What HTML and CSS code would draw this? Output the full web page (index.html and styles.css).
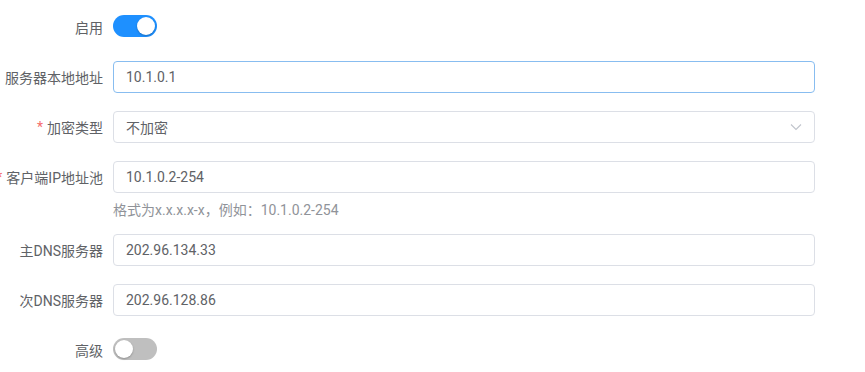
FILE: index.html
```html
<!DOCTYPE html>
<html lang="zh-CN">
<head>
<meta charset="utf-8">
<title>表单</title>
<link rel="stylesheet" href="styles.css">
</head>
<body>
<form class="form">
  <div class="row">
    <div class="label">启用</div>
    <div class="control"><span class="switch on"><span class="knob"></span></span></div>
  </div>
  <div class="row">
    <div class="label">服务器本地地址</div>
    <div class="control"><div class="input focus">10.1.0.1</div></div>
  </div>
  <div class="row">
    <div class="label"><span class="req">*</span>加密类型</div>
    <div class="control"><div class="input select">不加密
      <svg class="arrow" width="12" height="8" viewBox="0 0 12 8"><path d="M1 1.5 L6 6.5 L11 1.5" fill="none" stroke="#c0c4cc" stroke-width="1.1"/></svg></div></div>
  </div>
  <div class="row with-help">
    <div class="label"><span class="req">*</span>客户端IP地址池</div>
    <div class="control"><div class="input">10.1.0.2-254</div>
      <div class="help">格式为x.x.x.x-x，例如：10.1.0.2-254</div></div>
  </div>
  <div class="row">
    <div class="label">主DNS服务器</div>
    <div class="control"><div class="input">202.96.134.33</div></div>
  </div>
  <div class="row">
    <div class="label">次DNS服务器</div>
    <div class="control"><div class="input">202.96.128.86</div></div>
  </div>
  <div class="row">
    <div class="label">高级</div>
    <div class="control"><span class="switch off"><span class="knob"></span></span></div>
  </div>
</form>
</body>
</html>
```
FILE: styles.css
```css
html, body {
  margin: 0;
  padding: 0;
  background: #fff;
}
body {
  font-family: Roboto, "Noto Sans CJK SC", sans-serif;
  font-size: 14px;
  color: #606266;
}
.form {
  padding: 11px 50px 0 0;
}
.row {
  display: flex;
  align-items: flex-start;
  margin-bottom: 18px;
}
.row.with-help {
  margin-bottom: 0;
}
.label {
  flex: 0 0 113px;
  min-width: 0;
  box-sizing: border-box;
  padding-right: 10px;
  display: flex;
  justify-content: flex-end;
  align-items: center;
  height: 32px;
  white-space: nowrap;
  color: #606266;
}
.req {
  color: #f56c6c;
  margin-right: 4px;
}
.control {
  flex: 1;
  min-width: 0;
}
.input {
  box-sizing: border-box;
  height: 32px;
  border: 1px solid #dcdfe6;
  border-radius: 4px;
  padding: 0 12px;
  display: flex;
  align-items: center;
  color: #606266;
}
.input.focus {
  border-color: #88bdf0;
}
.input.select {
  justify-content: space-between;
}
.help {
  font-size: 14px;
  color: #909399;
  line-height: 20px;
  padding-top: 7px;
  height: 41px;
  box-sizing: border-box;
}
.switch {
  display: inline-flex;
  align-items: center;
  margin-top: 4px;
  width: 44px;
  height: 22px;
  border-radius: 11px;
  box-sizing: border-box;
  padding: 2px;
}
.switch.on {
  background: #1e90ff;
  justify-content: flex-end;
}
.switch.off {
  background: #bfbfbf;
  justify-content: flex-start;
}
.knob {
  width: 18px;
  height: 18px;
  border-radius: 50%;
  background: #fff;
  box-shadow: 0 1px 2px rgba(0, 0, 0, 0.25);
}
```
